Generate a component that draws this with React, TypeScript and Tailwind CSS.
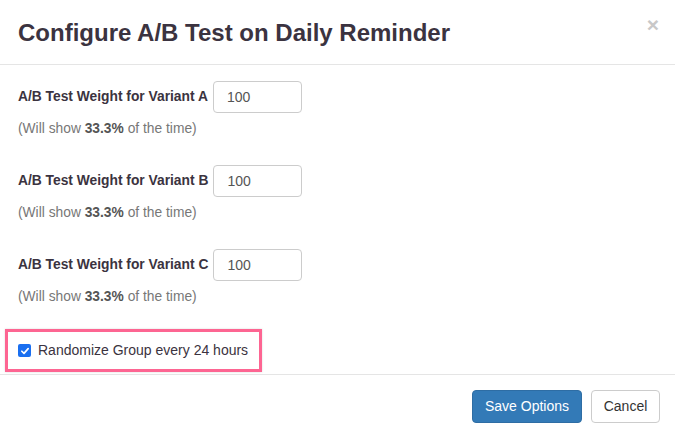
import React from "react";

const variants = ["A", "B", "C"];

const WeightGroup = ({ variant }: { variant: string }) => (
  <div className="mb-[26px]">
    <div className="flex items-center h-8">
      <label className="text-[13.8px] font-bold text-[#3b3340] mr-[5px]">
        A/B Test Weight for Variant {variant}
      </label>
      <div className="w-[89px] h-8 border border-[#cccccc] rounded-[4px] flex items-center pl-[13px] text-[14px] text-[#555]">
        100
      </div>
    </div>
    <p className="mt-[6px] leading-5 text-[13.8px] text-[#777]">
      (Will show <span className="font-bold text-[#555]">33.3%</span> of the time)
    </p>
  </div>
);

export default function App() {
  return (
    <div
      className="w-[675px] h-[439px] bg-white overflow-hidden"
      style={{ fontFamily: '"Liberation Sans", Arial, sans-serif' }}
    >
      {/* Header */}
      <div className="h-[65px] border-b border-[#e5e5e5] flex items-center justify-between pl-[18px] pr-[16px]">
        <h2 className="text-[24px] font-bold text-[#3b3340] mt-[1px]">
          Configure A/B Test on Daily Reminder
        </h2>
        <span className="text-[21px] font-bold text-[#c8c8c8] leading-none self-start mt-[14px]">×</span>
      </div>

      {/* Body */}
      <div className="pl-[18px] pt-[16px]">
        {variants.map((v) => (
          <WeightGroup key={v} variant={v} />
        ))}
      </div>

      {/* Highlighted checkbox */}
      <div className="ml-[5px] mt-[-4px] w-[257px] h-[43px] border-[3px] border-[#fd6592] shadow-[0_0_2px_rgba(0,0,0,0.15)] flex items-center pl-[10px]">
        <span className="w-[13px] h-[13px] rounded-[2px] bg-[#1a6ff0] flex items-center justify-center mr-[7px]">
          <svg viewBox="0 0 12 12" className="w-[10px] h-[10px]">
            <path d="M2.2 6.3 L4.8 8.8 L9.8 3.2" fill="none" stroke="white" strokeWidth="2" strokeLinecap="round" strokeLinejoin="round" />
          </svg>
        </span>
        <span className="text-[14px] text-[#3b3340]">Randomize Group every 24 hours</span>
      </div>

      {/* Footer */}
      <div className="mt-[2px] border-t border-[#e5e5e5] flex justify-end gap-[9px] pt-[15px] pr-[15px]">
        <button className="w-[110px] h-[33px] rounded-[4px] bg-[#337ab7] border border-[#2e6da4] text-white text-[14px]">
          Save Options
        </button>
        <button className="w-[69px] h-[33px] rounded-[4px] bg-white border border-[#cccccc] text-[#333] text-[14px]">
          Cancel
        </button>
      </div>
    </div>
  );
}
